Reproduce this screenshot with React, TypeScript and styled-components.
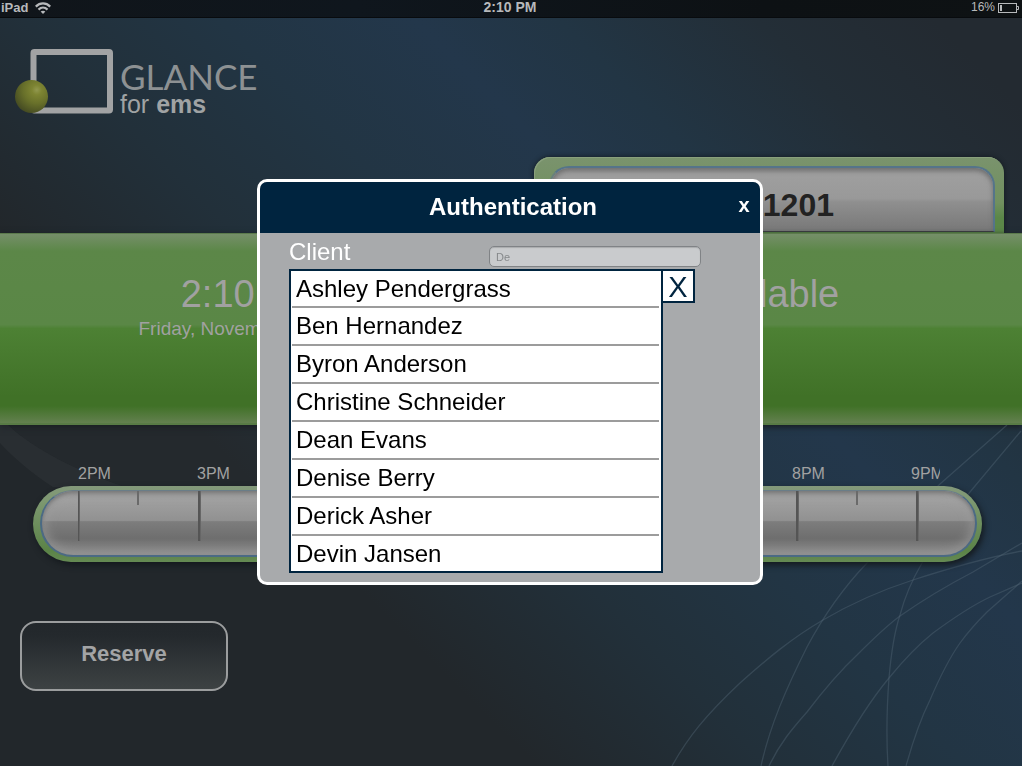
import React from "react";
import styled, { createGlobalStyle, css } from "styled-components";

const navy = "#00243f";
const dimText = "#a1a1a1";

const GlobalStyle = createGlobalStyle`
  *, *::before, *::after { box-sizing: border-box; }
  body { margin: 0; background: #22272b; }
  body, button, input { font-family: "Liberation Sans", Arial, sans-serif; }
  h1, h2, p, ul { margin: 0; padding: 0; }
`;

const Page = styled.div`
  min-height: 100vh;
  display: flex;
  flex-direction: column;
  overflow: hidden;
  background: linear-gradient(
    45deg,
    #22272b 30%,
    #22303a 43%,
    #223544 54%,
    #23374b 65%,
    #223544 73%,
    #232e37 84%,
    #232a31 94%
  );
`;

const StatusBar = styled.header`
  display: grid;
  grid-template-columns: 1fr auto 1fr;
  align-items: center;
  height: 18px;
  padding: 0 3px 2px 1px;
  background: linear-gradient(90deg, #10151a, #0f161d 35%, #0d1114 75%, #0e1214);
  border-bottom: 1px solid #080b0e;
  color: #b7b9bb;
  font-size: 13px;
  font-weight: bold;
  line-height: 15px;
`;

const StatusSide = styled.div<{ $end?: boolean }>`
  display: flex;
  align-items: center;
  gap: ${(p) => (p.$end ? 3 : 7)}px;
  justify-content: ${(p) => (p.$end ? "flex-end" : "flex-start")};
`;

const StatusTime = styled.time`
  font-size: 14px;
`;

const BatteryLevel = styled.span`
  font-size: 12px;
  font-weight: normal;
`;

const Masthead = styled.div`
  padding: 31px 15px 0;
  height: 139px;
`;

const Brand = styled.div`
  display: flex;
  gap: 6px;
  color: #8d9193;
`;

const BrandText = styled.div`
  display: flex;
  flex-direction: column;
  padding-top: 9px;
`;

const BrandName = styled.span`
  font-family: Lato, "Open Sans", sans-serif;
  font-size: 35px;
  line-height: 36px;
`;

const BrandSub = styled.span`
  font-size: 25px;
  line-height: 20px;
  color: #a0a3a4;
`;

const RoomTab = styled.section`
  align-self: flex-end;
  width: 46%;
  height: 76px;
  margin-right: 18px;
  padding: 9px 9px 0 15px;
  border-radius: 16px 16px 0 0;
  background: linear-gradient(#7a936d, #71905f 60%, #5b8748 80%);
  box-shadow: 0 0 5px #11181d, inset 1px 1px 0 #89a07c;
`;

const RoomPlate = styled.div`
  height: 66px;
  display: flex;
  align-items: center;
  justify-content: flex-end;
  padding: 11px 159px 0 0;
  border: 2px solid #55748a;
  border-bottom: 1px solid #3c3f42;
  border-left-color: #68807c;
  border-radius: 20px 20px 0 0;
  background: linear-gradient(#a0a0a0, #999 48%, #8f8f8f 54%, #787878);
  box-shadow: inset 0 3px 5px #6e6e6e;
  color: #222;
`;

const RoomName = styled.h1`
  font-size: 32px;
  line-height: 36px;
`;

const Banner = styled.section`
  display: grid;
  grid-template-columns: 1fr 1fr;
  height: 192px;
  padding-top: 38px;
  color: ${dimText};
  text-align: center;
  border-top: 1px solid #5b7a4c;
  border-bottom: 2px solid #587b45;
  background: linear-gradient(
    #758f69,
    #5c8748 9%,
    #5a8746 48%,
    #4d8134 50%,
    #407127 86%,
    #407127 91%,
    #63804f
  );
  box-shadow: 0 2px 6px #171c20;
`;

const BannerColumn = styled.div`
  padding-right: 8px;
`;

const BigText = styled.p`
  font-size: 38px;
  line-height: 44px;
`;

const DateText = styled.p`
  font-size: 19px;
  line-height: 26px;
`;

const Lower = styled.main`
  position: relative;
  flex: 1;
  display: flex;
  flex-direction: column;
  padding: 39px 0 0;
`;

const Swoosh = styled.svg`
  position: absolute;
  top: 0;
  left: 0;
`;

const Arcs = styled.svg`
  position: absolute;
  right: 0;
  bottom: 0;
`;

const HourLabels = styled.div`
  position: relative;
  display: flex;
  margin: 0 82px 0 78px;
  overflow: hidden;
  color: ${dimText};
  font-size: 16px;
  line-height: 20px;
`;

const HourLabel = styled.span<{ $last: boolean }>`
  flex: ${(p) => (p.$last ? "29 0 0" : "119 0 0")};
  min-width: 0;
`;

const Pill = styled.div`
  position: relative;
  height: 76px;
  margin: 2px 40px 0 33px;
  padding: 4px 5px 5px 7px;
  border-radius: 38px;
  background: linear-gradient(#84997b, #7d9870 20%, #5b8347 85%, #658a53);
  box-shadow: 2px 3px 6px #14191d;
`;

const Track = styled.div`
  height: 100%;
  display: flex;
  padding: 0 33px 0 36px;
  border: 2px solid #4b6a84;
  border-top: 1px solid #6a7d88;
  border-radius: 33px;
  background: linear-gradient(
    #999,
    #a0a0a0 14%,
    #919191 46%,
    #7d7d7d 48%,
    #6e6e6e 74%,
    #8b8b8b
  );
  box-shadow: inset 0 2px 4px #747474, inset 0 0 14px #a0a0a0;
`;

const HourSlot = styled.div<{ $last: boolean; $first: boolean }>`
  flex: ${(p) => (p.$last ? "26 0 0" : "120 0 0")};
  min-width: 0;
  display: flex;

  &::before {
    content: "";
    width: ${(p) => (p.$first ? 2 : 3)}px;
    height: 50px;
    background: #555;
    border-right: 1px solid #666;
  }

  ${(p) =>
    !p.$last &&
    css`
      &::after {
        content: "";
        width: 2px;
        height: 14px;
        margin-left: calc(50% - 3px);
        background: #6a6a6a;
      }
    `}
`;

const ReserveButton = styled.button`
  position: relative;
  width: 208px;
  height: 70px;
  margin: 59px 0 0 20px;
  padding: 0 0 5px;
  border: 2px solid #9b9d9e;
  border-radius: 16px;
  background: linear-gradient(#22272b, #24292d 20%, #3d4243);
  color: #a3a4a5;
  font-size: 22px;
  font-weight: bold;
`;

const Overlay = styled.div`
  position: fixed;
  inset: 0;
  display: flex;
  align-items: center;
  justify-content: center;
  padding: 0 2px 2px 0;
`;

const Dialog = styled.div`
  width: 506px;
  border: 3px solid #fff;
  border-radius: 10px;
  background: #a8aaac;
  overflow: hidden;
`;

const DialogHeader = styled.div`
  display: grid;
  grid-template-columns: 38px 1fr 32px;
  align-items: center;
  height: 51px;
  padding-bottom: 2px;
  background: ${navy};
  color: #fff;
  text-align: center;
`;

const DialogTitle = styled.h2`
  grid-column: 2;
  font-size: 24px;
  line-height: 28px;
`;

const DialogClose = styled.button`
  padding: 0 0 3px;
  border: 0;
  background: none;
  color: #fff;
  font-size: 20px;
  font-weight: bold;
  line-height: 24px;
`;

const DialogBody = styled.div`
  padding: 5px 29px 9px;
`;

const Field = styled.div`
  display: flex;
  justify-content: space-between;
  height: 31px;
  padding-right: 30px;
`;

const FieldLabel = styled.label`
  color: #fff;
  font-size: 24px;
  line-height: 28px;
`;

const FieldInput = styled.input`
  width: 212px;
  height: 21px;
  margin-top: 8px;
  padding: 0 6px;
  border: 1px solid #808386;
  border-radius: 5px;
  background: #c9cbcd;
  box-shadow: inset 0 1px 1px #a9abad;
  color: #85888a;
  font-size: 11px;
`;

const Suggestions = styled.div`
  display: flex;
  align-items: flex-start;
`;

const SuggestionList = styled.ul`
  width: 374px;
  padding: 0 2px 0 1px;
  border: 2px solid ${navy};
  background: #fff;
  list-style: none;
`;

const SuggestionRow = styled.li`
  & + & { border-top: 2px solid #9c9c9c; }
`;

const Suggestion = styled.button`
  display: block;
  width: 100%;
  height: 36px;
  padding: 0 4px;
  border: 0;
  background: none;
  color: #000;
  font-size: 24px;
  line-height: 34px;
  text-align: left;

  ${SuggestionRow}:first-child &,
  ${SuggestionRow}:last-child & {
    height: 35px;
  }
`;

const ClearButton = styled.button`
  width: 34px;
  height: 34px;
  margin-left: -2px;
  padding: 2px 0 0;
  border: 2px solid ${navy};
  background: #fff;
  color: ${navy};
  font-size: 29px;
  line-height: 28px;
`;

const hours = ["2PM", "3PM", "4PM", "5PM", "6PM", "7PM", "8PM", "9PM"];

const clients = [
  "Ashley Pendergrass",
  "Ben Hernandez",
  "Byron Anderson",
  "Christine Schneider",
  "Dean Evans",
  "Denise Berry",
  "Derick Asher",
  "Devin Jansen",
];

const WifiIcon = () => (
  <svg width="16" height="12" viewBox="0 0 16 12" fill="none" stroke="#b7b9bb" strokeWidth="2.2" aria-hidden="true">
    <path d="M.8 4.6C5 .4 11 .4 15.2 4.6" />
    <path d="M3.5 7.6C6.2 5 9.8 5 12.5 7.6" />
    <path d="M8 12L5.6 9.6C7 8.3 9 8.3 10.4 9.6Z" fill="#b7b9bb" stroke="none" />
  </svg>
);

const BatteryIcon = () => (
  <svg width="21" height="10" viewBox="0 0 21 10" fill="none" stroke="#b7b9bb" aria-hidden="true">
    <rect x=".5" y=".5" width="18" height="9" />
    <path d="M18.5 3.5H20.5V6.5H18.5" />
    <rect x="2" y="2" width="2" height="6" fill="#b7b9bb" stroke="none" />
  </svg>
);

const LogoMark = () => (
  <svg width="99" height="66" viewBox="0 0 99 66" aria-hidden="true">
    <defs>
      <radialGradient id="ball" cx="66%" cy="30%" r="75%">
        <stop offset="0" stopColor="#92984f" />
        <stop offset=".2" stopColor="#7d8432" />
        <stop offset=".55" stopColor="#68702a" />
        <stop offset="1" stopColor="#454b22" />
      </radialGradient>
    </defs>
    <rect x="18.5" y="3" width="76.5" height="58.5" rx="1" fill="none" stroke="#a2a3a4" strokeWidth="6" />
    <circle cx="16.5" cy="47.5" r="16.5" fill="url(#ball)" />
  </svg>
);

export default function App() {
  const last = hours.length - 1;
  return (
    <>
      <GlobalStyle />
      <Page>
        <StatusBar>
          <StatusSide>
            iPad
            <WifiIcon />
          </StatusSide>
          <StatusTime>2:10 PM</StatusTime>
          <StatusSide $end>
            <BatteryLevel>16%</BatteryLevel>
            <BatteryIcon />
          </StatusSide>
        </StatusBar>

        <Masthead>
          <Brand>
            <LogoMark />
            <BrandText>
              <BrandName>GLANCE</BrandName>
              <BrandSub>
                for <b>ems</b>
              </BrandSub>
            </BrandText>
          </Brand>
        </Masthead>

        <RoomTab>
          <RoomPlate>
            <RoomName>Room 1201</RoomName>
          </RoomPlate>
        </RoomTab>

        <Banner>
          <BannerColumn>
            <BigText>2:10 PM</BigText>
            <DateText>Friday, November 11, 2011</DateText>
          </BannerColumn>
          <BannerColumn>
            <BigText>Available</BigText>
          </BannerColumn>
        </Banner>

        <Lower>
          <Swoosh width="260" height="70" viewBox="0 0 260 70" aria-hidden="true">
            <path d="M0 0H8C35 25 75 45 125 62H53C34 50 15 34 0 18Z" fill="#fff" opacity=".035" />
            <path d="M8 0H260V62H125C75 45 35 25 8 0Z" fill="#fff" opacity=".01" />
          </Swoosh>
          <Arcs
            width="382"
            height="341"
            viewBox="0 0 382 341"
            fill="none"
            stroke="#566a78"
            strokeOpacity=".4"
            strokeWidth="1.3"
            aria-hidden="true"
          >
            <path d="M32 341C48 312 66 290 100 258C128 233 152 213 183 195C212 178 245 164 273 155C310 143 345 133 382 126" />
            <path d="M121 341C130 300 147 262 167 222C184 190 204 162 227 138C250 110 275 84 300 59L367 0" />
            <path d="M129 341C140 318 152 304 167 287C183 266 200 246 217 230C231 216 245 202 260 191C283 175 308 160 333 147L382 118" />
            <path d="M192 341C209 310 228 278 249 253C262 237 278 220 293 208C312 194 331 181 350 172L382 158" />
            <path d="M248 341C246 310 247 280 249 253C251 230 254 208 260 190C265 171 272 155 282 138C296 111 311 89 330 67L381 6" />
            <path d="M266 341C273 316 280 295 290 275C299 254 308 235 320 218C328 207 337 197 347 187L382 156" />
          </Arcs>

          <HourLabels>
            {hours.map((h, i) => (
              <HourLabel key={h} $last={i === last}>
                {h}
              </HourLabel>
            ))}
          </HourLabels>
          <Pill>
            <Track>
              {hours.map((h, i) => (
                <HourSlot key={h} $first={i === 0} $last={i === last} />
              ))}
            </Track>
          </Pill>
          <ReserveButton type="button">Reserve</ReserveButton>
        </Lower>
      </Page>

      <Overlay>
        <Dialog role="dialog" aria-modal="true" aria-labelledby="auth-title">
          <DialogHeader>
            <DialogTitle id="auth-title">Authentication</DialogTitle>
            <DialogClose type="button" aria-label="Close dialog">
              x
            </DialogClose>
          </DialogHeader>
          <DialogBody>
            <Field>
              <FieldLabel htmlFor="client">Client</FieldLabel>
              <FieldInput id="client" type="text" defaultValue="De" />
            </Field>
            <Suggestions>
              <SuggestionList>
                {clients.map((name) => (
                  <SuggestionRow key={name}>
                    <Suggestion type="button">{name}</Suggestion>
                  </SuggestionRow>
                ))}
              </SuggestionList>
              <ClearButton type="button" aria-label="Close suggestions">
                X
              </ClearButton>
            </Suggestions>
          </DialogBody>
        </Dialog>
      </Overlay>
    </>
  );
}
